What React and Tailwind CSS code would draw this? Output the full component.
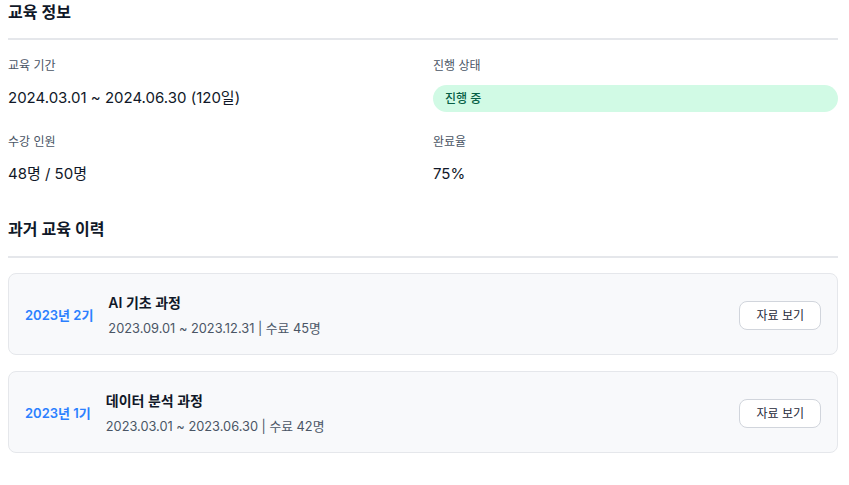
import React from 'react';

const font = { fontFamily: '"Inter", "Noto Sans CJK KR", sans-serif' };

const history = [
  { term: '2023년 2기', title: 'AI 기초 과정', detail: '2023.09.01 ~ 2023.12.31 | 수료 45명' },
  { term: '2023년 1기', title: '데이터 분석 과정', detail: '2023.03.01 ~ 2023.06.30 | 수료 42명' },
];

const Field = ({ label, children }) => (
  <div>
    <div className="text-xs leading-4 text-gray-600 mb-[11px]">{label}</div>
    <div className="h-[27px] flex items-center">{children}</div>
  </div>
);

export default function App() {
  return (
    <div className="bg-white text-gray-900 pl-2 pr-[11px]" style={font}>
      {/* 교육 정보 */}
      <h2 className="text-base leading-6 font-semibold pb-[14px] border-b-2 border-gray-200">교육 정보</h2>
      <div className="grid grid-cols-2 gap-x-5 gap-y-[22px] mt-[18px]">
        <Field label="교육 기간">
          <span className="text-[15px]">2024.03.01 ~ 2024.06.30 (120일)</span>
        </Field>
        <Field label="진행 상태">
          <span className="w-full h-[27px] flex items-center rounded-full bg-[#d1fae5] text-[#065f46] text-xs font-medium px-3">
            진행 중
          </span>
        </Field>
        <Field label="수강 인원">
          <span className="text-[15px]">48명 / 50명</span>
        </Field>
        <Field label="완료율">
          <span className="text-[15px]">75%</span>
        </Field>
      </div>

      {/* 과거 교육 이력 */}
      <h2 className="text-base leading-6 font-semibold pb-[15px] border-b-2 border-gray-200 mt-[29px]">과거 교육 이력</h2>
      <div className="flex flex-col gap-4 mt-[15px]">
        {history.map((h) => (
          <div
            key={h.term}
            className="flex items-center bg-[#f8f9fb] border border-gray-200 rounded-lg pl-4 pr-4 pt-[18px] pb-[15px]"
          >
            <div className="text-[13px] font-semibold text-blue-500 mr-[15px]">{h.term}</div>
            <div className="flex-1">
              <div className="text-[14px] leading-[22px] font-semibold">{h.title}</div>
              <div className="text-[12.8px] leading-5 text-gray-600 mt-[5px]">{h.detail}</div>
            </div>
            <button className="h-[29px] px-4 text-xs text-gray-800 bg-white border border-gray-300 rounded-lg">
              자료 보기
            </button>
          </div>
        ))}
      </div>
    </div>
  );
}
